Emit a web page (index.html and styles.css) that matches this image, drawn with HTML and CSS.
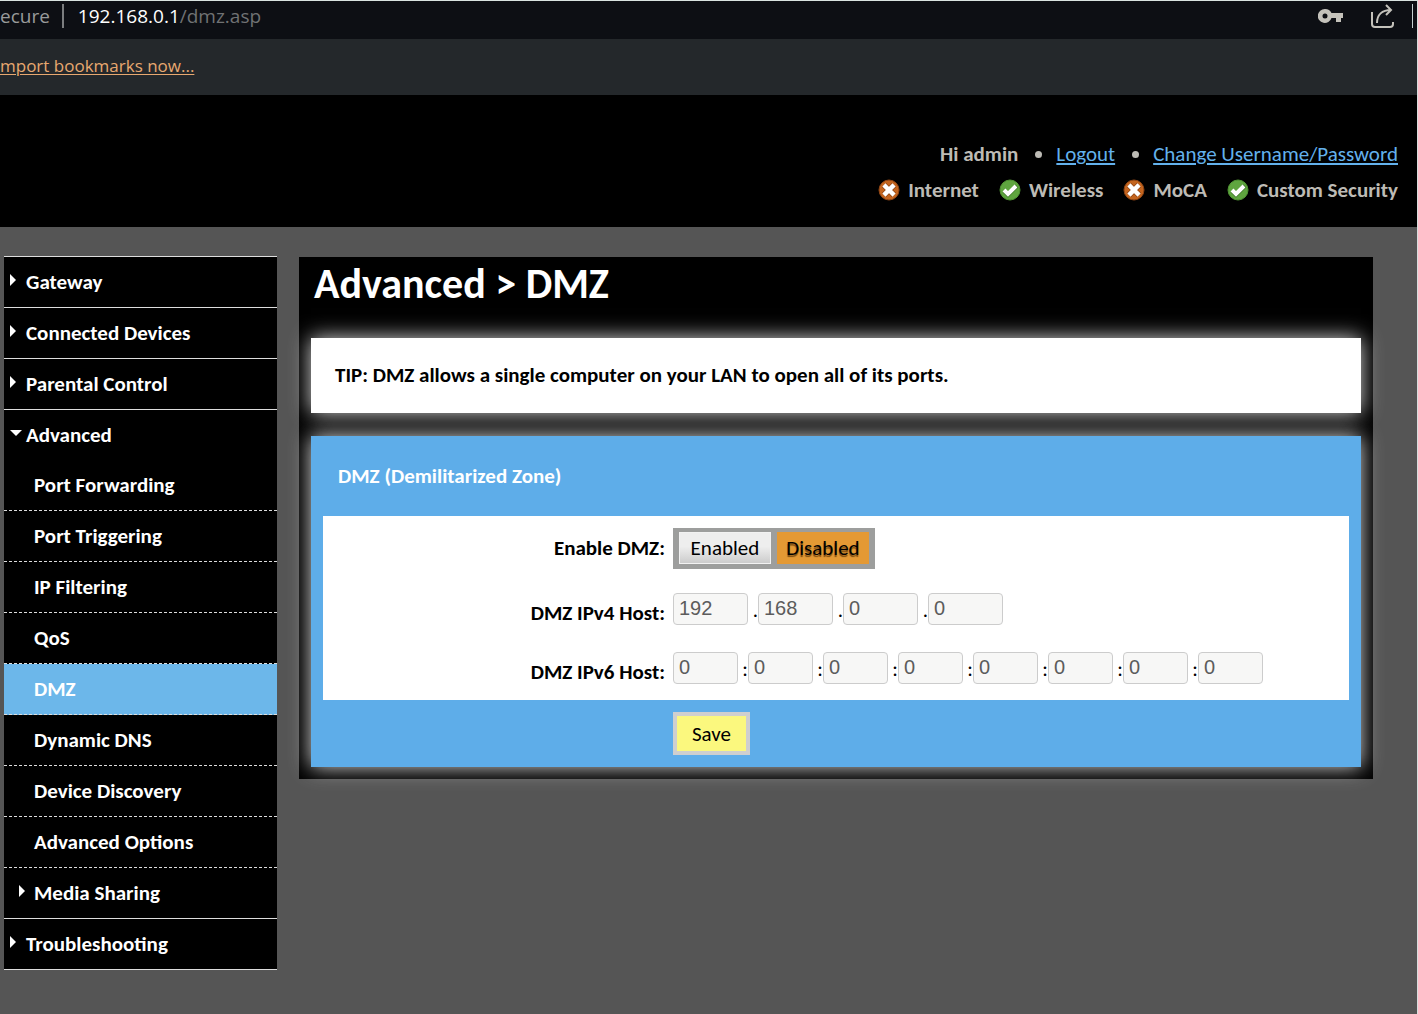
FILE: index.html
```html
<!DOCTYPE html>
<html lang="en">
<head>
<meta charset="utf-8">
<title>Advanced &gt; DMZ</title>
<link rel="stylesheet" href="styles.css">
</head>
<body>
<svg class="sprite" aria-hidden="true">
  <symbol id="bad" viewBox="0 0 22 22">
    <circle cx="11" cy="11" r="10" fill="#c4651f" stroke="#8f4514"/>
    <path d="M8 8l6 6M14 8l-6 6" stroke="#8f4514" stroke-width="6" stroke-linecap="square"/>
    <path d="M7.500 7.500l7 7M14.500 7.500l-7 7" stroke="#fff" stroke-width="4.500" stroke-linecap="square"/>
  </symbol>
  <symbol id="good" viewBox="0 0 22 22">
    <circle cx="11" cy="11" r="10" fill="#5fa53f" stroke="#4f9433"/>
    <path d="M5 12l4 4 9-9" fill="none" stroke="#3d7727" stroke-width="4"/>
    <path d="M5 11l4 4 8-8" fill="none" stroke="#fff" stroke-width="4"/>
  </symbol>
</svg>
<div class="address">
  <span class="secure">ecure</span>
  <span class="divider"></span>
  <span class="url">192.168.0.1<span class="path">/dmz.asp</span></span>
  <svg class="key" width="26" height="16" viewBox="0 0 26 16"><path fill="#c4c2bb" fill-rule="evenodd" d="M7 1a7 7 0 1 0 6.500 9H18v4h5v-4h2V5H13.500A7 7 0 0 0 7 1zm0 4.500a2.500 2.500 0 1 1 0 5 2.500 2.500 0 0 1 0-5z"/></svg>
  <svg width="24" height="24" viewBox="0 0 24 24" fill="none" stroke="#c4c2bb" stroke-width="2"><path d="M2 8v12q0 3 3 3h15q3 0 3-3v-2M7 19C7 11 12 6 21 6M16 1l5 5-5 5"/></svg>
  <span class="divider light"></span>
</div>
<div class="bookmarks"><a href="#">mport bookmarks now...</a></div>
<header class="top">
  <ul class="user">
    <li><strong>Hi admin</strong></li>
    <li class="dot"><a href="#">Logout</a></li>
    <li class="dot"><a href="#">Change Username/Password</a></li>
  </ul>
  <ul class="status">
    <li><svg width="22" height="22"><use href="#bad"/></svg>Internet</li>
    <li><svg width="22" height="22"><use href="#good"/></svg>Wireless</li>
    <li><svg width="22" height="22"><use href="#bad"/></svg>MoCA</li>
    <li><svg width="22" height="22"><use href="#good"/></svg>Custom Security</li>
  </ul>
</header>
<div class="layout">
  <nav class="menu">
    <a class="closed" href="#">Gateway</a>
    <a class="closed" href="#">Connected Devices</a>
    <a class="closed" href="#">Parental Control</a>
    <a class="open" href="#">Advanced</a>
    <div class="sub">
      <a href="#">Port Forwarding</a>
      <a href="#">Port Triggering</a>
      <a href="#">IP Filtering</a>
      <a href="#">QoS</a>
      <a class="current" href="#">DMZ</a>
      <a href="#">Dynamic DNS</a>
      <a href="#">Device Discovery</a>
      <a href="#">Advanced Options</a>
      <a class="closed" href="#">Media Sharing</a>
    </div>
    <a class="closed" href="#">Troubleshooting</a>
  </nav>
  <main class="content">
    <h1>Advanced &gt; DMZ</h1>
    <p class="tip">TIP: DMZ allows a single computer on your LAN to open all of its ports.</p>
    <form class="card">
      <h2>DMZ (Demilitarized Zone)</h2>
      <div class="fields">
        <div class="row">
          <span class="label" id="enable">Enable DMZ:</span>
          <div class="switch" role="group" aria-labelledby="enable">
            <button type="button" aria-pressed="false">Enabled</button>
            <button type="button" class="on" aria-pressed="true">Disabled</button>
          </div>
        </div>
        <div class="row">
          <label class="label" for="v4">DMZ IPv4 Host:</label>
          <div class="host v4">
            <input id="v4" value="192" disabled><span>.</span><input aria-label="IPv4 part 2" value="168" disabled><span>.</span><input aria-label="IPv4 part 3" value="0" disabled><span>.</span><input aria-label="IPv4 part 4" value="0" disabled>
          </div>
        </div>
        <div class="row">
          <label class="label" for="v6">DMZ IPv6 Host:</label>
          <div class="host v6">
            <input id="v6" value="0" disabled><span>:</span><input aria-label="IPv6 part 2" value="0" disabled><span>:</span><input aria-label="IPv6 part 3" value="0" disabled><span>:</span><input aria-label="IPv6 part 4" value="0" disabled><span>:</span><input aria-label="IPv6 part 5" value="0" disabled><span>:</span><input aria-label="IPv6 part 6" value="0" disabled><span>:</span><input aria-label="IPv6 part 7" value="0" disabled><span>:</span><input aria-label="IPv6 part 8" value="0" disabled>
          </div>
        </div>
      </div>
      <div class="row"><span></span><button class="save" type="submit">Save</button></div>
    </form>
  </main>
</div>
</body>
</html>
```
FILE: styles.css
```css
* { box-sizing: border-box; }
body {
  margin: 0;
  min-height: 100vh;
  background: #555;
  border-top: 1px solid #d9e3e0;
  border-right: 1px solid #d9dddd;
  font: 21px/24px Carlito, Lato, sans-serif;
  color: #000;
}
.sprite { display: none; }
ul { list-style: none; margin: 0; padding: 0; }

.address, .bookmarks { font-family: "Open Sans", sans-serif; }
.address {
  display: flex;
  align-items: center;
  height: 38px;
  padding-bottom: 8px;
  background: #0d0f14;
  font-size: 19px;
  color: #999b9b;
}
.divider { width: 2px; height: 24px; margin: 0 14px 0 12px; background: #7b7d7f; }
.divider.light { width: 1px; margin: 0 4px 0 18px; background: #c4d0d0; }
.url { color: #fff; }
.path { color: #707273; }
.key { margin: 0 26px 0 auto; }
.bookmarks {
  height: 56px;
  padding-top: 15px;
  background: #24282b;
  font-size: 17px;
}
.bookmarks a { color: #e8a870; text-underline-offset: 2px; text-decoration-thickness: 1px; }

.top {
  display: flex;
  flex-direction: column;
  align-items: flex-end;
  gap: 12px;
  height: 132px;
  padding: 47px 19px 0 0;
  background: #000;
  color: #bdbbb5;
}
.user, .status { display: flex; }
.user a { color: #63b1ec; text-underline-offset: 2px; text-decoration-thickness: 2px; }
.dot::before {
  content: "";
  display: inline-block;
  width: 7px;
  height: 7px;
  margin: 0 14px 3px 17px;
  border-radius: 50%;
  background: #bdbbb5;
}
.status { gap: 20px; font-weight: 700; }
.status li { display: flex; align-items: center; gap: 8px; }

.layout {
  display: flex;
  align-items: flex-start;
  gap: 22px;
  padding: 29px 44px 45px 4px;
}
.menu {
  flex: none;
  width: 273px;
  border-top: 1px solid #ddd;
  background: #000;
  font-weight: 700;
}
.menu a {
  display: flex;
  align-items: center;
  height: 51px;
  padding-left: 22px;
  border-bottom: 1px solid #ddd;
  color: #fff;
  text-decoration: none;
}
.menu a.open { height: 50px; border-bottom: 0; }
.menu .sub a { padding-left: 30px; border-bottom-style: dashed; }
.menu .sub a.current { background: #6cb7ea; }
.menu .closed::before {
  content: "";
  width: 6px;
  height: 12px;
  margin: 0 10px 4px -16px;
  background: #fff;
  clip-path: polygon(0 0, 100% 50%, 0 100%);
}
.menu .open::before {
  content: "";
  width: 12px;
  height: 6px;
  margin: 0 4px 4px -16px;
  background: #fff;
  clip-path: polygon(0 0, 100% 0, 50% 100%);
}
.menu .sub .closed { border-bottom-style: solid; }
.menu .sub .closed::before { margin: 0 9px 4px -15px; }

.content {
  flex: 1;
  margin-top: 1px;
  padding: 0 12px 12px;
  background: #000;
}
h1 {
  margin: 0 0 27px 3px;
  font-size: 42px;
  line-height: 54px;
  color: #fff;
}
.tip {
  margin: 0 0 23px;
  padding: 25px 24px 26px;
  background: #fff;
  box-shadow: 0 0 20px #ddd;
  font-weight: 700;
}
.card {
  padding: 0 12px 12px;
  background: #5eade9;
  box-shadow: 0 0 20px #ddd;
}
h2 {
  margin: 0;
  padding: 28px 15px;
  font-size: 21px;
  line-height: 24px;
  color: #fff;
}
.row {
  display: grid;
  grid-template-columns: 33.33% 1fr;
  gap: 8px;
  align-items: start;
}
.fields {
  display: grid;
  gap: 24px;
  margin-bottom: 12px;
  padding: 12px 0 13px;
  background: #fff;
}
.fields .row { min-height: 35px; }
.label { padding-top: 8px; text-align: right; font-weight: 700; }
.host { display: flex; }
.host input {
  height: 32px;
  padding: 0 5px 2px;
  border: 1px solid #ccc;
  border-radius: 4px;
  background: #f7f7f6;
  font: 20px "Liberation Sans", Arial, sans-serif;
  color: #5c5c5c;
}
.v4 input { width: 75px; }
.v6 input { width: 65px; }
.host span { width: 10px; padding: 5px 0 0; text-align: right; }
button { padding: 0; font: inherit; color: #000; }
.switch {
  display: flex;
  gap: 6px;
  justify-self: start;
  padding: 4px 6px 5px;
  background: #9d9e9d;
}
.switch button {
  width: 92px;
  height: 32px;
  border: 1px solid #f2f2f2;
  background: linear-gradient(#eee 45%, #ccc);
}
.switch .on { border-color: #e49934; background: #e49934; text-shadow: 0 2px 1px #7a4a10; }
.save {
  justify-self: start;
  width: 77px;
  height: 43px;
  border: 4px solid #cfcfcf;
  background: #fbf87e;
}
```
